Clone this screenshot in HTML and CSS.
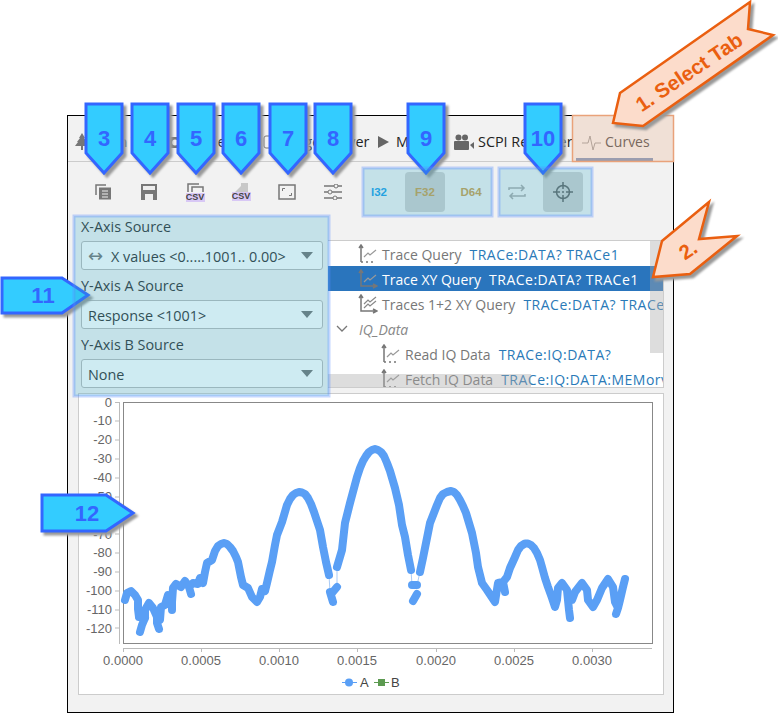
FILE: index.html
```html
<!DOCTYPE html>
<html>
<head>
<title>Curves tab</title>
<meta charset="UTF-8">
<link rel="stylesheet" href="styles.css">
</head>
<body>

<svg class="defs" width="0" height="0">
  <symbol id="trace" viewBox="0 0 20 20">
    <path d="M3 1v17M1 4l2-3 2 3" fill="none" stroke="#777" stroke-width="1.5"/>
    <path d="M3 18h2M8 18h2M13 18h2" stroke="#777" stroke-width="1.5"/>
    <path d="M6 13l4-4 2 2 6-5" fill="none" stroke="#999" stroke-width="1.2"/>
  </symbol>
  <symbol id="tracexy" viewBox="0 0 20 20">
    <path d="M3 1v16h15M1 4l2-3 2 3M15 15l4 2-4 2" fill="none" stroke="#777" stroke-width="1.5"/>
    <path d="M6 13l4-4 2 2 6-5" fill="none" stroke="#999" stroke-width="1.2"/>
  </symbol>
  <symbol id="tracesxy" viewBox="0 0 20 20">
    <path d="M3 1v16h15M1 4l2-3 2 3M15 15l4 2-4 2" fill="none" stroke="#777" stroke-width="1.5"/>
    <path d="M6 10l4-4 2 2 6-5M6 14l4-4 2 2 6-5" fill="none" stroke="#888" stroke-width="1.2"/>
  </symbol>
</svg>

<div class="window">

  <!-- Tabs -->
  <div class="tabs">
    <div class="tab tab-main">
      <svg width="14" height="17" viewBox="0 0 14 17"><path d="M7 0l3 5H9l3 4h-1l3 4H8v4H6v-4H0l3-4H2l3-4H4z" fill="#777"/></svg>
      Main Tree
    </div>
    <div class="tab tab-mode">
      <svg width="14" height="14" viewBox="0 0 14 14"><rect y="2" width="14" height="11" rx="1" fill="#777"/><circle cx="7" cy="7.5" r="3" fill="#eee"/></svg>
      Mode
    </div>
    <div class="tab tab-image">
      <svg width="11" height="14" viewBox="0 0 11 14"><rect x="1" y="1" width="9" height="12" rx="2" fill="none" stroke="#777"/></svg>
      Image Viewer
    </div>
    <div class="tab tab-macro">
      <svg width="11" height="12" viewBox="0 0 11 12"><path d="M0 0l11 6-11 6z" fill="#666"/></svg>
      Macro
    </div>
    <div class="tab tab-scpi">
      <svg width="20" height="16" viewBox="0 0 20 16"><circle cx="4.5" cy="3.5" r="3" fill="#666"/><circle cx="11" cy="3.5" r="3" fill="#666"/><rect y="7" width="15" height="9" rx="1" fill="#666"/><path d="M16 11l4-3v7z" fill="#666"/></svg>
      SCPI Recorder
    </div>
    <div class="tab tab-curves">
      <svg width="20" height="18" viewBox="0 0 20 18"><path d="M0 10h6l2-7 3 14 2-7h6" fill="none" stroke="#aaa"/></svg>
      Curves
    </div>
  </div>

  <!-- Toolbar -->
  <div class="toolbar">
    <div class="tool">
      <svg width="17" height="16" viewBox="0 0 17 16"><path d="M1 11V1h10" fill="none" stroke="#777" stroke-width="1.5"/><rect x="4" y="3.500" width="12" height="12" fill="#777"/><path d="M7 7h6M7 10h6M7 13h6" stroke="#eee"/></svg>
    </div>
    <div class="tool">
      <svg width="16" height="16" viewBox="0 0 16 16"><path d="M0 0h16v16H0z" fill="#777"/><rect x="2" y="2" width="12" height="4" fill="#eee"/><rect x="4" y="10" width="8" height="6" fill="#eee"/></svg>
    </div>
    <div class="tool tool-csv">
      <svg width="17" height="10" viewBox="0 0 17 10"><path d="M1 9V1h11M5 9V4h11v5" fill="none" stroke="#777" stroke-width="1.500"/></svg>
      <span class="csv">CSV</span>
    </div>
    <div class="tool tool-csv">
      <svg width="13" height="9" viewBox="0 0 13 9"><path d="M0 9l6-6V0h7v9z" fill="#c8c8c8"/></svg>
      <span class="csv">CSV</span>
    </div>
    <div class="tool">
      <svg width="18" height="16" viewBox="0 0 18 16"><rect x="1" y="1" width="16" height="14" fill="none" stroke="#777" stroke-width="1.500"/><path d="M4.500 7V4.500H7M13.500 9v2.500H11" fill="none" stroke="#777"/></svg>
    </div>
    <div class="tool">
      <svg width="18" height="16" viewBox="0 0 18 16"><path d="M0 2h18M0 8h18M0 14h18" stroke="#777" stroke-width="1.500"/><circle cx="12" cy="2" r="2" fill="#f2f2f2" stroke="#777"/><circle cx="6" cy="8" r="2" fill="#f2f2f2" stroke="#777"/><circle cx="11" cy="14" r="2" fill="#f2f2f2" stroke="#777"/></svg>
    </div>
    <div class="tool type type-i">I32</div>
    <div class="tool type tool-on">F32</div>
    <div class="tool type">D64</div>
    <div class="tool">
      <svg width="18" height="16" viewBox="0 0 18 16"><path d="M1 6V4h14M13 1l3 3-3 3M17 10v2H3M5 9l-3 3 3 3" fill="none" stroke="#aaa" stroke-width="1.500"/></svg>
    </div>
    <div class="tool tool-on">
      <svg width="20" height="20" viewBox="0 0 20 20"><circle cx="10" cy="10" r="6.500" fill="none" stroke="#666" stroke-width="1.500"/><path d="M10 0v7M10 13v7M0 10h7M13 10h7" stroke="#666" stroke-width="1.500"/><circle cx="10" cy="10" r="1" fill="#666"/></svg>
    </div>
  </div>

  <div class="panels">
    <!-- Axis sources -->
    <div class="sources">
      <div class="field">X-Axis Source</div>
      <div class="combo">
        <span class="combo-arrows">&#8596;</span>
        <span class="combo-text">X values &lt;0.....1001.. 0.00&gt;</span>
        <span class="caret"></span>
      </div>
      <div class="field">Y-Axis A Source</div>
      <div class="combo">
        <span class="combo-text">Response &lt;1001&gt;</span>
        <span class="caret"></span>
      </div>
      <div class="field">Y-Axis B Source</div>
      <div class="combo">
        <span class="combo-text">None</span>
        <span class="caret"></span>
      </div>
    </div>

    <!-- Query tree -->
    <div class="tree">
      <div class="row row-1"><svg width="20" height="20"><use href="#trace"/></svg>Trace Query<span class="cmd">TRACe:DATA? TRACe1</span></div>
      <div class="row row-1 row-sel"><svg width="20" height="20"><use href="#tracexy"/></svg>Trace XY Query<span class="cmd">TRACe:DATA? TRACe1</span></div>
      <div class="row row-1"><svg width="20" height="20"><use href="#tracesxy"/></svg>Traces 1+2 XY Query<span class="cmd">TRACe:DATA? TRACe1</span></div>
      <div class="row row-group">
        <svg class="chevron" width="12" height="8" viewBox="0 0 12 8"><path d="M1 1l5 5 5-5" fill="none" stroke="#777" stroke-width="1.300"/></svg>
        <em>IQ_Data</em>
      </div>
      <div class="row row-2"><svg width="20" height="20"><use href="#trace"/></svg>Read IQ Data<span class="cmd">TRACe:IQ:DATA?</span></div>
      <div class="row row-2"><svg width="20" height="20"><use href="#trace"/></svg>Fetch IQ Data<span class="cmd">TRACe:IQ:DATA:MEMory</span></div>
      <div class="scroll-v"></div>
      <div class="scroll-h"></div>
    </div>
  </div>

  <!-- Chart -->
  <div class="chart">
    <svg width="584" height="300" viewBox="79 394 584 300">
      <rect x="123.500" y="402.500" width="529" height="241" fill="#fff" stroke="#888"/>
      <path d="M119.500 402v242M115 402.500h4M115 421h4M115 440h4M115 459h4M115 478h4M115 497h4M115 515h4M115 534h4M115 553h4M115 572h4M115 591h4M115 610h4M115 628h4" stroke="#bbb" fill="none"/>
      <path d="M123 648.500h529M123.500 648v4M201.500 648v4M279.500 648v4M357.500 648v4M436.500 648v4M514.500 648v4M592.500 648v4" stroke="#bbb" fill="none"/>
      <g class="y-labels">
        <text x="112" y="407">0</text>
        <text x="112" y="425">-10</text>
        <text x="112" y="444">-20</text>
        <text x="112" y="463">-30</text>
        <text x="112" y="482">-40</text>
        <text x="112" y="501">-50</text>
        <text x="112" y="520">-60</text>
        <text x="112" y="539">-70</text>
        <text x="112" y="557">-80</text>
        <text x="112" y="576">-90</text>
        <text x="112" y="595">-100</text>
        <text x="112" y="614">-110</text>
        <text x="112" y="633">-120</text>
      </g>
      <g class="x-labels">
        <text x="123" y="665">0.0000</text>
        <text x="201" y="665">0.0005</text>
        <text x="279" y="665">0.0010</text>
        <text x="357" y="665">0.0015</text>
        <text x="436" y="665">0.0020</text>
        <text x="514" y="665">0.0025</text>
        <text x="592" y="665">0.0030</text>
      </g>
      <path class="thin" d="M329 575L330 592M411 570L412 585M417 585L420 572M337 587L337 567"/>
      <path class="curve" d="M125 600L127 593 131 591 135 595 138 600 138 609 139 617M145 618L142 625 140 632M139 617L145 618M145 618L145 610 149 603 153 608 157 617 157 623 159 629M157 617L160 620 161 607 165 605 168 595 172 602 172 610M172 602L173 588 176 584 181 587 185 581 189 587 191 594M189 587L193 583 198 584 200 578 203 583 205 572 207 563 212 560 215 551 218 546 221 544 224 543 227 544 230 547 233 551 236 557 238 562 241 577 243 585 248 588 252 597 257 602 260 597 262 589 265 591 267 583 270 570 272 562 275 545 277 535 282 522 287 505 290 499 293 495 296 493 299 492 302 492.500 305 494 308 498 311 504 314 512 320 530 323 547 326 562 329 575M330 592L333 602M337 587L332 593M337 567L342 550 345 523 350 503 357 477 360 468 363 461 366 456 369 452 372 450 375 449 378 450 381 452 384 456 387 463 390 471 395 488 399 505 402 525 405 537 408 555 411 570M412 585L417 585M413 601L417 594M420 572L423 558 426 543 430 523 437 505 440 498 443 494 447 492 451 491 454 492 457 495 460 500 463 506 466 513 472 533 476 553 478 567 482 583 487 590 495 602 498 583 503 582 505 592M503 582L507 577 510 568 515 557 518 550 521 546 525 543.500 528 543.500 531 545 534 548 537 553 540 560 542 567 545 578 548 587 552 598 555 607 557 600 558 588 562 583 567 590 568 600 569 610 570 618M568 600L572 600 575 592 582 583 587 590 588 600 593 607 597 600 602 588 608 579 613 587 615 602 618 608 616 614M618 608L620 600 623 587 625 579"/>
      <path d="M342 682.500h15" stroke="#5a9ff5"/>
      <circle cx="349" cy="682.500" r="4" fill="#5a9ff5"/>
      <text class="legend" x="360" y="687">A</text>
      <path d="M374 682.500h15" stroke="#5c9a50"/>
      <rect x="378" y="679" width="7" height="7" fill="#5c9a50"/>
      <text class="legend" x="391" y="687">B</text>
    </svg>
  </div>
</div>

<!-- Numbered callouts drawn over the window -->
<svg class="notes" width="778" height="713" viewBox="0 0 778 713">
  <g class="note-blue">
    <path d="M2 278H62L88 295 62 313H2z"/>
    <path d="M42 495H106L133 513 106 531H42z"/>
    <path d="M86 104H122V153L104 173 86 153z"/>
    <path d="M132 104H168V153L150 173 132 153z"/>
    <path d="M178 104H214V153L196 173 178 153z"/>
    <path d="M223 104H259V153L241 173 223 153z"/>
    <path d="M270 104H306V153L288 173 270 153z"/>
    <path d="M315 104H351V153L333 173 315 153z"/>
    <path d="M408 104H444V153L426 173 408 153z"/>
    <path d="M525 104H561V153L543 173 525 153z"/>
  </g>
  <g class="note-num">
    <text x="43" y="303">11</text>
    <text x="87" y="521">12</text>
    <text x="104" y="146">3</text>
    <text x="150" y="146">4</text>
    <text x="196" y="146">5</text>
    <text x="241" y="146">6</text>
    <text x="288" y="146">7</text>
    <text x="333" y="146">8</text>
    <text x="426" y="146">9</text>
    <text x="543" y="146">10</text>
  </g>
  <rect class="mark" x="74" y="216" width="255" height="180"/>
  <rect class="mark" x="363" y="168" width="129" height="48"/>
  <rect class="mark" x="499" y="168" width="93" height="48"/>
  <rect class="tab-mark" x="572.500" y="115.500" width="101" height="46"/>
  <g class="note-orange">
    <path d="M613 123L620 93 750 2 748 29 773 35 643 126z"/>
    <path d="M709 202L699 239 737 236 690 274 653 277 662 241z"/>
  </g>
  <text class="note-label" transform="translate(693 78) rotate(-34)">1. Select Tab</text>
  <text class="note-label" transform="translate(692 256) rotate(-34)">2.</text>
</svg>

</body>
</html>
```

FILE: styles.css
```css
* {
  box-sizing: border-box;
}

body {
  margin: 0;
  background: white;
  font-family: "Open Sans", "Liberation Sans", sans-serif;
  font-size: 14.4px;
  color: #333;
}

.defs {
  position: absolute;
}

.window {
  width: 607px;
  height: 598px;
  margin: 115px 0 0 67px;
  background: #f2f2f2;
  border: 1px solid black;
}

/* Tabs */
.tabs {
  display: flex;
  align-items: center;
  height: 46px;
  padding-left: 7px;
  border-bottom: 1px solid #ccc;
  color: #222;
  position: relative;
}

.tab {
  display: flex;
  align-items: center;
  gap: 5px;
  white-space: nowrap;
  padding-top: 6px;
}

.tab-main { width: 93px; }
.tab-mode { width: 95px; }
.tab-image { width: 115px; }
.tab-macro { width: 76px; gap: 7px; }
.tab-scpi { width: 128px; gap: 4px; }

.tab-curves {
  color: #666;
  gap: 3px;
  font-size: 14px;
}

.tab-curves::after {
  content: "";
  position: absolute;
  left: 508px;
  right: 20px;
  bottom: 0;
  height: 3px;
  background: #8fa3c4;
}

/* Toolbar */
.toolbar {
  display: flex;
  gap: 6px;
  padding: 10px 0 0 15px;
  height: 50px;
}

.tool {
  display: flex;
  align-items: center;
  justify-content: center;
  width: 40px;
  height: 40px;
  border-radius: 4px;
}

.tool-on {
  background: #d0d0d0;
}

.tool-csv {
  flex-direction: column;
  justify-content: flex-start;
  padding-top: 11px;
}

.csv {
  width: 19px;
  height: 9px;
  background: #d8c8f5;
  color: #444;
  font-family: "Liberation Sans", sans-serif;
  font-size: 9px;
  font-weight: bold;
  line-height: 9px;
  text-align: center;
}

.type {
  font-family: "Liberation Sans", sans-serif;
  font-size: 11.5px;
  font-weight: bold;
  color: #cb9f4e;
}

.type-i {
  color: #1fa0e8;
}

/* Sources and tree */
.panels {
  display: flex;
  height: 181px;
  padding-left: 13px;
}

.sources {
  width: 242px;
  padding-top: 5px;
}

.field {
  height: 20px;
  line-height: 20px;
  margin-bottom: 4px;
}

.combo {
  display: flex;
  align-items: center;
  height: 29px;
  margin-bottom: 6px;
  padding: 0 9px 0 6px;
  background: white;
  border: 1px solid #bbb;
  border-radius: 3px;
}

.combo-arrows {
  width: 23px;
  color: #777;
  font-size: 18px;
  font-family: "DejaVu Sans", sans-serif;
  line-height: 1;
}

.combo-text {
  flex: 1;
  padding-top: 1px;
  white-space: nowrap;
}

.caret {
  width: 0;
  height: 0;
  border-left: 6px solid transparent;
  border-right: 6px solid transparent;
  border-top: 7px solid #777;
}

.tree {
  position: relative;
  width: 336px;
  height: 148px;
  margin: 28px 0 0 5px;
  background: white;
  border-top: 1px solid #ccc;
  border-bottom: 1px solid #ccc;
  border-right: 1px solid #ccc;
  overflow: hidden;
  font-size: 14px;
}

.row {
  display: flex;
  align-items: center;
  height: 25px;
  padding-top: 1px;
  color: #777;
  white-space: nowrap;
}

.row svg {
  flex: none;
  margin-right: 4px;
}

.row-1 { padding-left: 30px; }
.row-2 { padding-left: 53px; }
.row-group { padding-left: 8px; }

.row-group em {
  margin-left: 11px;
  color: #888;
}

.row-group .chevron {
  margin-right: 0;
}

.row-sel {
  background: #2a75bd;
  color: white;
}

.cmd {
  margin-left: 8px;
  color: #2a7ab8;
  letter-spacing: 0.5px;
}

.row-sel .cmd {
  color: white;
}

.scroll-v {
  position: absolute;
  top: 0;
  right: 0;
  width: 13px;
  height: 112px;
  background: rgba(170, 170, 170, 0.4);
}

.scroll-h {
  position: absolute;
  left: 0;
  bottom: 0;
  width: 203px;
  height: 13px;
  background: rgba(170, 170, 170, 0.4);
}

/* Chart */
.chart {
  width: 586px;
  height: 302px;
  margin-left: 10px;
  background: white;
  border: 1px solid #ccc;
}

.chart svg {
  display: block;
}

.chart text {
  font-family: "Liberation Sans", sans-serif;
  font-size: 13px;
  fill: #666;
}

.y-labels text {
  text-anchor: end;
}

.x-labels text {
  text-anchor: middle;
}

.chart .legend {
  fill: #444;
}

.curve {
  fill: none;
  stroke: #5a9ff5;
  stroke-width: 8;
  stroke-linecap: round;
  stroke-linejoin: round;
}

.thin {
  fill: none;
  stroke: #a9cbf7;
}

/* Callouts */
.notes {
  position: absolute;
  left: 0;
  top: 0;
  pointer-events: none;
}

.note-blue path {
  fill: #33ccff;
  stroke: #3366ff;
  stroke-width: 3;
  filter: drop-shadow(3px 3px 1px #999);
}

.note-num text {
  font-family: "Liberation Sans", sans-serif;
  font-size: 22px;
  font-weight: bold;
  fill: #3366ff;
  text-anchor: middle;
}

.mark {
  fill: rgba(51, 170, 200, 0.24);
  stroke: rgba(90, 140, 255, 0.35);
  stroke-width: 3;
}

.tab-mark {
  fill: rgba(235, 120, 50, 0.14);
  stroke: #e9a27a;
  stroke-width: 1.5;
}

.note-orange path {
  fill: #fcdccb;
  stroke: #ea5f10;
  stroke-width: 2.5;
  filter: drop-shadow(3px 3px 1px #999);
}

.note-label {
  font-family: "Liberation Sans", sans-serif;
  font-size: 20.5px;
  font-weight: bold;
  fill: #ea5f10;
  text-anchor: middle;
}
```
